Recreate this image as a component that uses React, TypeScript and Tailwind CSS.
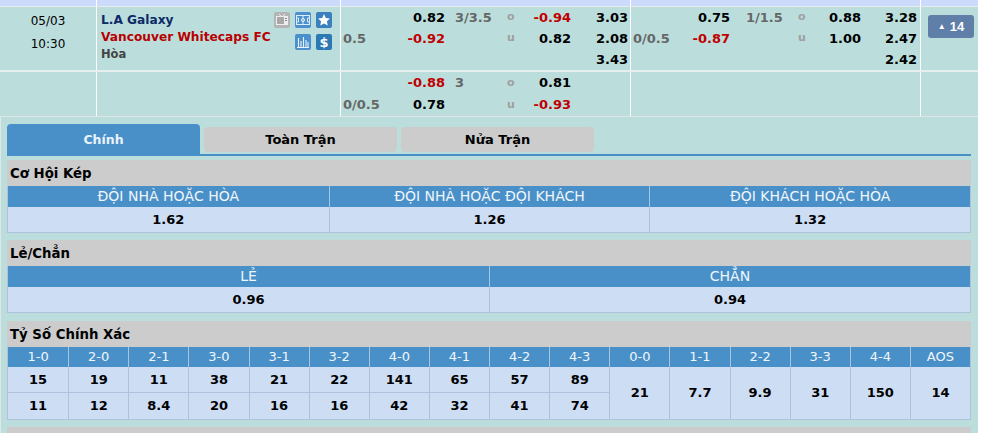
import React from 'react';

const FONT = "font-['DejaVu_Sans',Verdana,sans-serif]";

function Num({ v }: { v: string }) {
  const neg = v.startsWith('-');
  return <span className={`font-bold ${neg ? 'text-[#c00000]' : 'text-black'}`}>{v}</span>;
}

function IconTile({ children, className }: { children: React.ReactNode; className: string }) {
  return (
    <span className={`flex h-4 w-4 items-center justify-center rounded-[2px] ${className}`}>
      <svg width="14" height="14" viewBox="0 0 14 14" fill="none">{children}</svg>
    </span>
  );
}

function MatchIcons() {
  return (
    <div className="absolute top-[5px] right-[8px] grid grid-cols-3 gap-x-[5px] gap-y-[6px]">
      <IconTile className="bg-[#b4b4b4]">
        <path d="M4 1l2 2M10 1L8 3" stroke="#eee" strokeWidth="1" />
        <rect x="1" y="3" width="12" height="9" fill="#eee" />
        <rect x="2" y="4" width="7" height="7" fill="#a8a8a8" />
        <rect x="10" y="5" width="2" height="1" fill="#888" />
        <rect x="10" y="7" width="2" height="1" fill="#888" />
      </IconTile>
      <IconTile className="bg-[#4b90cc]">
        <rect x="0.5" y="2.5" width="13" height="9" stroke="#dcecf8" />
        <path d="M7 2.5v9" stroke="#dcecf8" />
        <circle cx="7" cy="7" r="1.6" stroke="#dcecf8" />
        <path d="M0.5 5h2v4h-2M13.5 5h-2v4h2" stroke="#dcecf8" />
      </IconTile>
      <IconTile className="bg-[#3b80be]">
        <path d="M7 1l1.8 3.9 4.2.5-3.1 2.9.8 4.2L7 10.5 3.3 12.5l.8-4.2L1 5.4l4.2-.5z" fill="#fff" />
      </IconTile>
      <span />
      <IconTile className="bg-[#4b90cc]">
        <path d="M2.5 3v9M5 6v6M7.5 2v10M10 5v7M12 7v5M1 12.5h12" stroke="#e8f2fa" strokeWidth="1.1" />
      </IconTile>
      <IconTile className="bg-[#2b78b4]">
        <text x="7" y="11.5" textAnchor="middle" fontSize="13" fontWeight="700" fill="#fff" fontFamily="DejaVu Sans">$</text>
      </IconTile>
    </div>
  );
}

// one block of handicap / over-under / 1x2 columns
function OddsBlock({ rows, cols, linePad }: { rows: string[][]; cols: string; linePad: string }) {
  return (
    <div className={`grid ${cols} items-center text-[13px]`}>
      {rows.flatMap((r, i) => [
        <span key={`a${i}`} className="pl-[2px] font-bold text-[#666]">{r[0]}</span>,
        <span key={`b${i}`} className="text-right"><Num v={r[1]} /></span>,
        <span key={`c${i}`} className={`${linePad} font-bold text-[#666]`}>{r[2]}</span>,
        <span key={`d${i}`} className="text-[11px] font-bold text-[#a0a0a0]">{r[3]}</span>,
        <span key={`e${i}`} className="text-right"><Num v={r[4]} /></span>,
        <span key={`f${i}`} className="text-right"><Num v={r[5]} /></span>,
      ])}
    </div>
  );
}

const SCORES = [
  ['1-0', '15', '11'], ['2-0', '19', '12'], ['2-1', '11', '8.4'], ['3-0', '38', '20'], ['3-1', '21', '16'],
  ['3-2', '22', '16'], ['4-0', '141', '42'], ['4-1', '65', '32'], ['4-2', '57', '41'], ['4-3', '89', '74'],
];
const DRAWS = [['0-0', '21'], ['1-1', '7.7'], ['2-2', '9.9'], ['3-3', '31'], ['4-4', '150'], ['AOS', '14']];

function SectionTitle({ children }: { children: React.ReactNode }) {
  return <div className="flex h-[26px] items-center bg-[#cccccc] pt-[2px] pl-[3px] text-[13.3px] font-bold text-black">{children}</div>;
}

function SimpleTable({ items, cols }: { items: string[][]; cols: string }) {
  return (
    <div className={`grid ${cols} border-x border-b border-[#afc1dc]`}>
      {items.map(([h], i) => (
        <div key={h} className={`flex h-[21px] items-center justify-center bg-[#4a90c8] text-[14px] text-[#f0f6fb] ${i ? 'border-l border-[#a9c4df]' : ''}`}>{h}</div>
      ))}
      {items.map(([h, v], i) => (
        <div key={h} className={`flex h-[25px] items-center justify-center bg-[#cdddf4] text-[13px] font-bold text-black ${i ? 'border-l border-[#afc1dc]' : ''}`}>{v}</div>
      ))}
    </div>
  );
}

export default function App() {
  return (
    <div className={`${FONT} h-[433px] w-[988px] overflow-hidden bg-white`}>
      <div className="w-[978px]">
        {/* strip left over from the header row */}
        <div className="grid h-[7px] grid-cols-[96px_244px_290px_290px_58px] border-b border-[#e8eeee] bg-[#ccdbfb]">
          <span /><span className="border-l border-white" /><span className="border-l border-white" /><span className="border-l border-white" /><span className="border-l border-white" />
        </div>

        {/* match row */}
        <div className="grid h-[65px] grid-cols-[96px_244px_290px_290px_58px] border-b-2 border-[#e8eeee] bg-[#bbdedd]">
          <div className="flex flex-col items-center pt-[3px] text-[12px] leading-[23px] text-black">
            <span>05/03</span>
            <span>10:30</span>
          </div>
          <div className="relative border-l border-white pt-[5px] pl-[4px] text-[12.2px] leading-[17px] font-bold">
            <div className="text-[#0c2a66]">L.A Galaxy</div>
            <div className="text-[#b80000]">Vancouver Whitecaps FC</div>
            <div className="text-[11.5px] text-[#444]">Hòa</div>
            <MatchIcons />
          </div>
          <div className="border-l border-white">
            <OddsBlock
              cols="grid-cols-[64px_40px_62px_20px_44px_57px] auto-rows-[21px]"
              linePad="pl-[10px]"
              rows={[
                ['', '0.82', '3/3.5', 'o', '-0.94', '3.03'],
                ['0.5', '-0.92', '', 'u', '0.82', '2.08'],
                ['', '', '', '', '', '3.43'],
              ]}
            />
          </div>
          <div className="border-l border-white">
            <OddsBlock
              cols="grid-cols-[60px_39px_68px_20px_43px_56px] auto-rows-[21px]"
              linePad="pl-[16px]"
              rows={[
                ['', '0.75', '1/1.5', 'o', '0.88', '3.28'],
                ['0/0.5', '-0.87', '', 'u', '1.00', '2.47'],
                ['', '', '', '', '', '2.42'],
              ]}
            />
          </div>
          <div className="border-l border-white pt-[8px] pl-[7px]">
            <div className="flex h-[23px] w-[46px] items-center justify-center gap-[4px] rounded-[3px] bg-[#5f7fa9] font-['Liberation_Sans',Arial,sans-serif] text-[13px] font-bold text-white">
              <span className="text-[8px]">▲</span>14
            </div>
          </div>
        </div>

        {/* second handicap row */}
        <div className="grid h-[44px] grid-cols-[96px_244px_290px_290px_58px] bg-[#bbdedd]">
          <div />
          <div className="border-l border-white" />
          <div className="border-l border-white">
            <OddsBlock
              cols="grid-cols-[64px_40px_62px_20px_44px_57px] auto-rows-[22px]"
              linePad="pl-[10px]"
              rows={[
                ['', '-0.88', '3', 'o', '0.81', ''],
                ['0/0.5', '0.78', '', 'u', '-0.93', ''],
              ]}
            />
          </div>
          <div className="border-l border-white" />
          <div className="border-l border-white" />
        </div>

        {/* detail panel */}
        <div className="border-t border-l border-[#dfe6e6] bg-[#bbdedd] pt-[7px] pr-[7px] pb-[10px] pl-[6px]">
          <div className="flex h-[32px] items-end gap-[4px] border-b-2 border-[#4a90c8]">
            <div className="flex h-[30px] w-[193px] items-center justify-center rounded-t-[4px] bg-[#4a90c8] pt-[2px] text-[12.5px] font-bold text-[#e8f2fa]">Chính</div>
            <div className="mb-[2px] flex h-[25px] w-[193px] items-center justify-center rounded-[4px] bg-[#cccccc] text-[13px] font-bold text-black">Toàn Trận</div>
            <div className="mb-[2px] flex h-[25px] w-[193px] items-center justify-center rounded-[4px] bg-[#cccccc] text-[13px] font-bold text-black">Nửa Trận</div>
          </div>

          <div className="mt-[4px]">
            <SectionTitle>Cơ Hội Kép</SectionTitle>
            <SimpleTable
              cols="grid-cols-3"
              items={[['ĐỘI NHÀ HOẶC HÒA', '1.62'], ['ĐỘI NHÀ HOẶC ĐỘI KHÁCH', '1.26'], ['ĐỘI KHÁCH HOẶC HÒA', '1.32']]}
            />
          </div>

          <div className="mt-[7px]">
            <SectionTitle>Lẻ/Chẳn</SectionTitle>
            <SimpleTable cols="grid-cols-2" items={[['LẺ', '0.96'], ['CHẲN', '0.94']]} />
          </div>

          <div className="mt-[8px]">
            <SectionTitle>Tỷ Số Chính Xác</SectionTitle>
            <div className="grid grid-cols-16 grid-rows-[20px_26px_26px] border-x border-b border-[#afc1dc] text-[13px]">
              {[...SCORES, ...DRAWS].map(([h], i) => (
                <div key={h} className={`flex items-center justify-center bg-[#4a90c8] text-[#f0f6fb] ${i ? 'border-l border-[#a9c4df]' : ''}`}>{h}</div>
              ))}
              {SCORES.map(([h, a], i) => (
                <div key={h} className={`flex items-center justify-center border-b border-[#afc1dc] bg-[#cdddf4] font-bold text-black ${i ? 'border-l' : ''}`}>{a}</div>
              ))}
              {DRAWS.map(([h, v]) => (
                <div key={h} className="row-span-2 flex items-center justify-center border-l border-[#afc1dc] bg-[#cdddf4] font-bold text-black">{v}</div>
              ))}
              {SCORES.map(([h, , b], i) => (
                <div key={h} className={`flex items-center justify-center border-[#afc1dc] bg-[#cdddf4] font-bold text-black ${i ? 'border-l' : ''}`}>{b}</div>
              ))}
            </div>
          </div>

          <div className="mt-[7px] h-[26px] bg-[#cccccc]" />
        </div>
      </div>
    </div>
  );
}
